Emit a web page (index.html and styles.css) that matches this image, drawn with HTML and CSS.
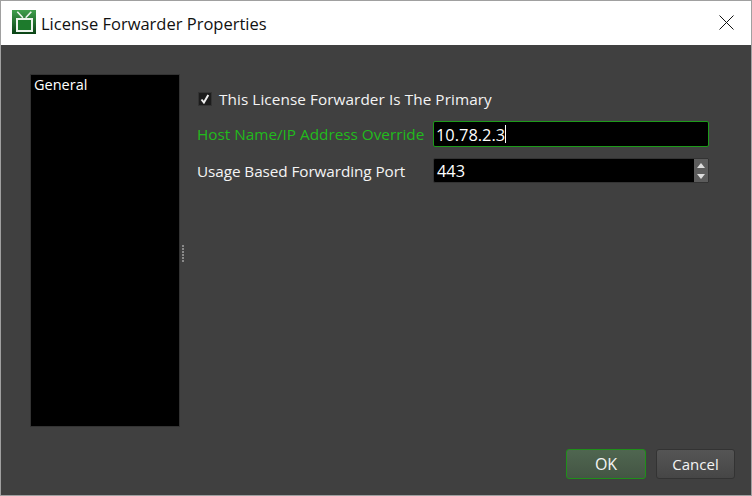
FILE: index.html
```html
<!DOCTYPE html>
<html lang="en">

<head>
    <meta charset="UTF-8">
    <title>License Forwarder Properties</title>
    <link rel="stylesheet" href="styles.css">
</head>

<body>
    <div class="window">
        <div class="titlebar">
            <svg class="app-icon" width="24" height="24" viewBox="0 0 24 24">
                <defs>
                    <linearGradient id="bg" x1="0" y1="0" x2="0" y2="1">
                        <stop offset="0" stop-color="#3f9f4c" />
                        <stop offset="1" stop-color="#0a4215" />
                    </linearGradient>
                </defs>
                <rect width="24" height="24" fill="url(#bg)" />
                <path d="M5.3 1.7l5.6 6M19.3 1.7l-5.6 6" stroke="#eef5ee" stroke-width="1.6" fill="none" />
                <rect x="5" y="9" width="15" height="12" fill="#1d7a2c" stroke="#eef5ee" stroke-width="2" />
            </svg>
            <span class="title">License Forwarder Properties</span>
            <svg class="close" width="15" height="15" viewBox="0 0 15 15">
                <path d="M0.5 0.5l14 14M14.5 0.5l-14 14" stroke="#111" stroke-width="1" fill="none" />
            </svg>
        </div>
        <div class="content">
            <div class="main">
                <div class="sidebar">General</div>
                <div class="splitter">
                    <span></span><span></span><span></span><span></span><span></span><span></span>
                </div>
                <div class="form">
                    <div class="check-row">
                        <span class="checkbox">
                            <svg width="10" height="10" viewBox="0 0 10 10">
                                <path d="M1.5 5.5l2.4 3 4.4-7.5" stroke="#eee" stroke-width="2" fill="none" />
                            </svg>
                        </span>
                        <span class="check-label">This License Forwarder Is The Primary</span>
                    </div>
                    <div class="field-row">
                        <label class="changed">Host Name/IP Address Override</label>
                        <div class="input focused">10.78.2.3<span class="caret"></span></div>
                    </div>
                    <div class="field-row">
                        <label class="port-label">Usage Based Forwarding Port</label>
                        <div class="input spin">
                            <span class="value">443</span>
                            <div class="spin-btns">
                                <span class="up"></span>
                                <span class="down"></span>
                            </div>
                        </div>
                    </div>
                </div>
            </div>
            <div class="buttons">
                <button class="btn default">OK</button>
                <button class="btn">Cancel</button>
            </div>
        </div>
    </div>
</body>

</html>
```

FILE: styles.css
```css
html,
body {
    margin: 0;
    padding: 0;
}

body {
    width: 752px;
    height: 496px;
    overflow: hidden;
    font-family: "Open Sans", "Noto Sans", sans-serif;
    font-size: 14.5px;
}

.window {
    box-sizing: border-box;
    width: 752px;
    height: 496px;
    border: 1px solid #a0a0a0;
    display: flex;
    flex-direction: column;
    background: #404040;
}

.titlebar {
    height: 44px;
    background: #fff;
    display: flex;
    align-items: center;
    padding: 0 17px 0 11px;
    flex-shrink: 0;
}

.app-icon {
    margin-right: 5px;
    margin-bottom: 2px;
}

.title {
    font-size: 16.5px;
    color: #111;
    flex: 1;
}

.close {
    margin-bottom: 1px;
}

.content {
    flex: 1;
    display: flex;
    flex-direction: column;
    padding: 29px 16px 16px 29px;
}

.main {
    flex: 1;
    display: flex;
}

.sidebar {
    box-sizing: border-box;
    width: 150px;
    height: 353px;
    background: #000;
    border: 1px solid #333;
    color: #fff;
    padding: 0 3px;
    line-height: 20px;
}

.splitter {
    box-sizing: border-box;
    width: 6px;
    height: 353px;
    padding-top: 6px;
    display: flex;
    flex-direction: column;
    justify-content: center;
    align-items: center;
    gap: 1px;
}

.splitter span {
    width: 2px;
    height: 2px;
    background: #8a8a8a;
}

.form {
    margin-left: 11px;
    width: 512px;
    color: #f4f4f4;
    font-size: 15.3px;
}

.check-row {
    display: flex;
    align-items: center;
    height: 20px;
    margin-top: 15px;
    padding-left: 1px;
}

.check-label {
    letter-spacing: 0.08px;
}

.port-label {
    letter-spacing: -0.08px;
}

.checkbox {
    box-sizing: border-box;
    width: 14px;
    height: 14px;
    background: #1c1c1c;
    border: 1px solid #333;
    display: flex;
    align-items: center;
    justify-content: center;
    margin-right: 7px;
}

.field-row {
    display: flex;
    align-items: center;
    margin-top: 11px;
}

.check-row + .field-row {
    margin-top: 12px;
}

.field-row label {
    width: 236px;
    flex-shrink: 0;
}

.changed {
    color: #22bb1c;
}

.input {
    box-sizing: border-box;
    width: 276px;
    height: 26px;
    background: #000;
    border: 1px solid #333;
    border-radius: 2px;
    color: #fff;
    font-size: 16.4px;
    display: flex;
    align-items: center;
    padding-left: 2px;
}

.focused {
    border-color: #1d9a1a;
}

.caret {
    width: 1px;
    height: 18px;
    background: #fff;
}

.spin {
    height: 25px;
    justify-content: space-between;
    padding-right: 0;
}

.spin .value {
    padding-left: 1px;
}

.spin-btns {
    width: 14px;
    height: 100%;
    background: #5c5c5c;
    display: flex;
    flex-direction: column;
    align-items: center;
    justify-content: center;
    gap: 6px;
}

.up {
    border-left: 4px solid transparent;
    border-right: 4px solid transparent;
    border-bottom: 5px solid #ddd;
}

.down {
    border-left: 4px solid transparent;
    border-right: 4px solid transparent;
    border-top: 5px solid #ddd;
}

.buttons {
    display: flex;
    justify-content: flex-end;
    gap: 10px;
}

.btn {
    box-sizing: border-box;
    width: 79px;
    height: 30px;
    border: 1px solid #333;
    border-radius: 3px;
    background: linear-gradient(#555, #464646);
    color: #f4f4f4;
    font-family: inherit;
    font-size: 15px;
    padding: 0;
}

.default {
    width: 80px;
    border-color: #1f8f1a;
    background: linear-gradient(#4f6650, #445544);
    font-size: 16px;
}
```
